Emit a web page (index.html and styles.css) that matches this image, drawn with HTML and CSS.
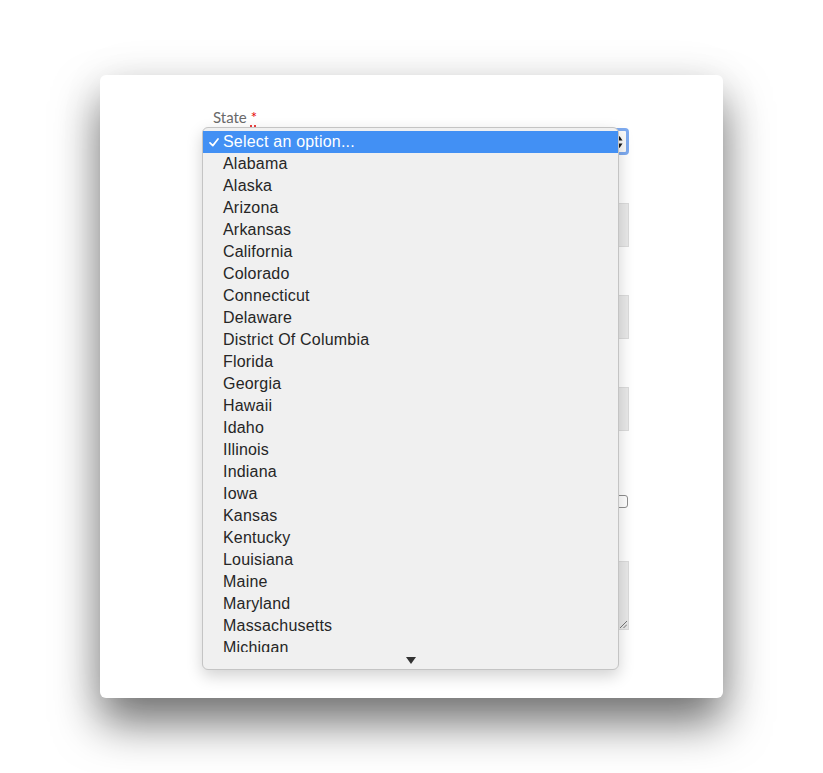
FILE: index.html
```html
<!DOCTYPE html>
<html lang="en">
<head>
<meta charset="utf-8">
<title>State</title>
<link rel="stylesheet" href="styles.css">
</head>
<body>
<div class="stage">
  <div class="card">
    <form class="form">
      <div class="field">
        <label class="label">State <abbr class="req" title="required">*</abbr></label>
        <div class="select-wrap">
          <div class="select" aria-label="Select an option...">
            <svg class="stepper" width="7" height="14" viewBox="0 0 7 14"><path d="M3.5 1 L6.5 5.5 L0.5 5.5 Z M3.5 13 L6.5 8.5 L0.5 8.5 Z" fill="#1a1a1a"/></svg>
          </div>
          <div class="menu">
            <ul class="options">
              <li class="opt selected"><svg class="check" width="10" height="9" viewBox="0 0 10 9"><path d="M1 4.8 L3.8 7.6 L9 1" fill="none" stroke="#fff" stroke-width="1.7" stroke-linecap="round" stroke-linejoin="round"/></svg>Select an option...</li>
              <li class="opt">Alabama</li>
              <li class="opt">Alaska</li>
              <li class="opt">Arizona</li>
              <li class="opt">Arkansas</li>
              <li class="opt">California</li>
              <li class="opt">Colorado</li>
              <li class="opt">Connecticut</li>
              <li class="opt">Delaware</li>
              <li class="opt">District Of Columbia</li>
              <li class="opt">Florida</li>
              <li class="opt">Georgia</li>
              <li class="opt">Hawaii</li>
              <li class="opt">Idaho</li>
              <li class="opt">Illinois</li>
              <li class="opt">Indiana</li>
              <li class="opt">Iowa</li>
              <li class="opt">Kansas</li>
              <li class="opt">Kentucky</li>
              <li class="opt">Louisiana</li>
              <li class="opt">Maine</li>
              <li class="opt">Maryland</li>
              <li class="opt">Massachusetts</li>
              <li class="opt">Michigan</li>
            </ul>
            <div class="scroll-down">
              <svg width="10" height="7" viewBox="0 0 10 7"><path d="M0 0 H10 L5 7 Z" fill="#333"/></svg>
            </div>
          </div>
        </div>
      </div>
      <div class="field">
        <span class="label" aria-label="City"></span>
        <div class="input"></div>
      </div>
      <div class="field">
        <span class="label" aria-label="Zip"></span>
        <div class="input"></div>
      </div>
      <div class="field">
        <span class="label" aria-label="Phone"></span>
        <div class="input"></div>
      </div>
      <div class="check-row">
        <span class="label" aria-label="Subscribe"></span>
        <span class="checkbox"></span>
      </div>
      <div class="field">
        <span class="label" aria-label="Notes"></span>
        <div class="textarea">
          <svg class="grip" width="8" height="8" viewBox="0 0 8 8"><path d="M1 8 L8 1 M4.5 8 L8 4.5" stroke="#777" stroke-width="1"/></svg>
        </div>
      </div>
    </form>
  </div>
</div>
</body>
</html>
```

FILE: styles.css
```css
html, body {
  margin: 0;
  padding: 0;
  background: #ffffff;
}

.stage {
  padding: 75px 0 0 100px;
  min-height: 773px;
  box-sizing: border-box;
}

.card {
  width: 623px;
  height: 623px;
  background: #ffffff;
  border-radius: 6px;
  box-shadow: 0 25px 45px rgba(0, 0, 0, 0.55), 0 0 50px rgba(0, 0, 0, 0.05);
}

.form {
  margin: 0 0 0 113px;
  padding-top: 32px;
  width: 416px;
  display: flex;
  flex-direction: column;
}

.field {
  display: flex;
  flex-direction: column;
  margin-bottom: 27px;
}

.label {
  display: block;
  font-family: Lato, "Open Sans", sans-serif;
  font-size: 15px;
  line-height: 21px;
  color: #6a6a6a;
  height: 21px;
}

.req {
  color: #e60000;
  text-decoration: underline dotted #e60000;
  text-underline-offset: 3px;
  cursor: help;
}

.select-wrap {
  position: relative;
}

.select {
  height: 27px;
  box-sizing: border-box;
  border: 3px solid #7eabf0;
  border-radius: 4px;
  background: #fafafa;
  display: flex;
  align-items: center;
  justify-content: flex-end;
  padding: 0 3px 0 8px;
}

.stepper {
  display: block;
}

.menu {
  position: absolute;
  left: -11px;
  top: -1px;
  width: 417px;
  height: 543px;
  box-sizing: border-box;
  background: #f0f0f0;
  border: 1px solid #c4c4c4;
  border-radius: 6px;
  box-shadow: 0 6px 16px rgba(0, 0, 0, 0.18);
  padding-top: 3px;
  display: flex;
  flex-direction: column;
  z-index: 5;
}

.options {
  list-style: none;
  margin: 0;
  padding: 0;
  height: 521px;
  overflow: hidden;
}

.opt {
  height: 22px;
  line-height: 22px;
  padding-left: 20px;
  font-family: "Liberation Sans", Arial, sans-serif;
  font-size: 16px;
  letter-spacing: 0.2px;
  color: #262626;
  white-space: nowrap;
  position: relative;
}

.opt.selected {
  background: #4290f4;
  color: #ffffff;
}

.check {
  position: absolute;
  left: 6px;
  top: 7px;
}

.scroll-down {
  flex: 1;
  display: flex;
  justify-content: center;
  padding-top: 5px;
}

.scroll-down svg {
  display: block;
}

.input {
  height: 44px;
  box-sizing: border-box;
  background: #e9e9e9;
  border: 1px solid #dcdcdc;
}

.check-row {
  display: flex;
  justify-content: space-between;
  align-items: center;
  margin-top: 33px;
  margin-bottom: 28px;
}

.checkbox {
  width: 13px;
  height: 13px;
  box-sizing: border-box;
  border: 1px solid #8f8f8f;
  border-radius: 3px;
  background: #fff;
  margin-right: 1px;
}

.textarea {
  height: 69px;
  box-sizing: border-box;
  background: #e9e9e9;
  border: 1px solid #dcdcdc;
  position: relative;
}

.grip {
  position: absolute;
  right: 1px;
  bottom: 1px;
}
```
